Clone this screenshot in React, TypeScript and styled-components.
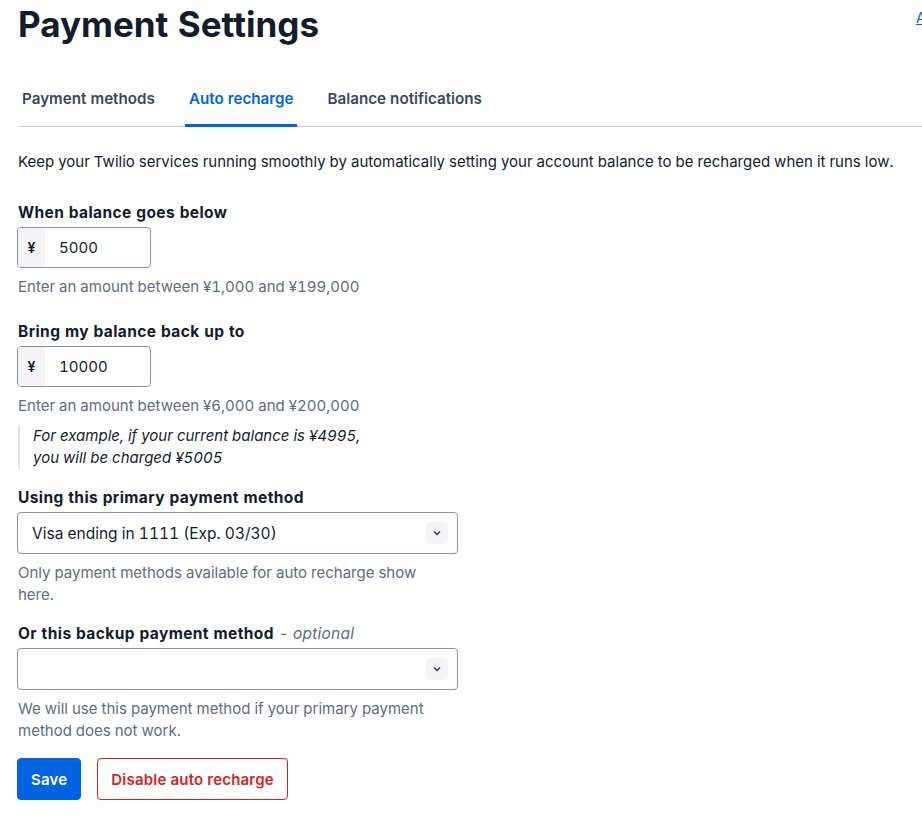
import React from 'react';
import styled, {createGlobalStyle} from 'styled-components';

const GlobalStyle = createGlobalStyle`
    html, body {
        margin: 0;
        padding: 0;
        overflow: hidden;
        background: #ffffff;
    }
    body {
        font-family: Inter, 'Noto Sans', sans-serif;
        font-variant-numeric: tabular-nums;
        color: #121c2d;
        -webkit-font-smoothing: antialiased;
    }
`

const tabs = ['Payment methods', 'Auto recharge', 'Balance notifications'];

const Chevron = () => (
    <svg width="10" height="10" viewBox="0 0 20 20" fill="none">
        <path d="M5 8l5 5 5-5" stroke="#394762" strokeWidth="3.4" strokeLinecap="round" strokeLinejoin="round"/>
    </svg>
);

export default function App() {
    return (
        <Page>
            <GlobalStyle/>
            <Header>
                <Title>Payment Settings</Title>
                <TopLink href="#">Add funds</TopLink>
            </Header>

            <TabList>
                {tabs.map((t) => (
                    <Tab key={t} $active={t === 'Auto recharge'}>{t}</Tab>
                ))}
            </TabList>

            <Intro>
                Keep your Twilio services running smoothly by automatically setting your account balance to be recharged when it runs low.
            </Intro>

            <Form>
                <Field $extra>
                    <Label>When balance goes below</Label>
                    <AmountInput>
                        <Prefix>¥</Prefix>
                        <Value>5000</Value>
                    </AmountInput>
                    <Help>Enter an amount between ¥1,000 and ¥199,000</Help>
                </Field>

                <Field>
                    <Label>Bring my balance back up to</Label>
                    <AmountInput>
                        <Prefix>¥</Prefix>
                        <Value>10000</Value>
                    </AmountInput>
                    <Help>Enter an amount between ¥6,000 and ¥200,000</Help>
                    <Example>
                        For example, if your current balance is ¥4995,<br/>
                        you will be charged ¥5005
                    </Example>
                </Field>

                <Field>
                    <Label>Using this primary payment method</Label>
                    <Select>
                        <SelectText>Visa ending in 1111 (Exp. 03/30)</SelectText>
                        <ChevronBox><Chevron/></ChevronBox>
                    </Select>
                    <Help $narrow>Only payment methods available for auto recharge show here.</Help>
                </Field>

                <Field>
                    <Label>Or this backup payment method <Optional>- optional</Optional></Label>
                    <Select>
                        <SelectText/>
                        <ChevronBox><Chevron/></ChevronBox>
                    </Select>
                    <Help $narrow>We will use this payment method if your primary payment method does not work.</Help>
                </Field>

                <Actions>
                    <Button $variant="primary">Save</Button>
                    <Button $variant="destructive">Disable auto recharge</Button>
                </Actions>
            </Form>
        </Page>
    );
}

const Page = styled.div`
    width: 1100px;
    padding: 0 0 0 18px;
    box-sizing: border-box;
`
const Header = styled.header`
    display: flex;
    align-items: flex-start;
`
const Title = styled.h1`
    min-width: 898px;
    margin: 0;
    padding-top: 1px;
    font-size: 35px;
    line-height: 46px;
    font-weight: 700;
    color: #121c2d;
`
const TopLink = styled.a`
    margin-top: 8px;
    font-size: 14px;
    line-height: 20px;
    color: #0263e0;
    text-decoration: underline;
`
const TabList = styled.nav`
    display: flex;
    gap: 26px;
    margin-top: 41px;
    border-bottom: 1px solid #cacdd8;
`
const Tab = styled.div<{ $active?: boolean }>`
    padding: 0 4px 14px;
    font-size: 15.2px;
    line-height: 22px;
    font-weight: 600;
    color: ${p => p.$active ? '#0263e0' : '#394762'};
    border-bottom: 3px solid ${p => p.$active ? '#0263e0' : 'transparent'};
    margin-bottom: -1px;
`
const Intro = styled.p`
    margin: 24px 0 0;
    font-size: 15px;
    line-height: 22px;
    color: #121c2d;
`
const Form = styled.div`
    display: flex;
    flex-direction: column;
    gap: 17px;
    margin-top: 29px;
    width: 440px;
`
const Field = styled.div<{ $extra?: boolean }>`
    display: flex;
    flex-direction: column;
    padding-bottom: ${p => p.$extra ? '6px' : '0'};
`
const Label = styled.label`
    font-size: 15.5px;
    line-height: 22px;
    font-weight: 700;
    color: #121c2d;
    margin-bottom: 3px;
    letter-spacing: 0.4px;
    white-space: nowrap;
`
const Optional = styled.span`
    font-weight: 400;
    font-style: italic;
    color: #606b85;
    letter-spacing: 0.2px;
`
const AmountInput = styled.div`
    display: flex;
    width: 134px;
    height: 41px;
    box-sizing: border-box;
    border: 1px solid #8891aa;
    border-radius: 4px;
    overflow: hidden;
    margin-left: -1px;
`
const Prefix = styled.span`
    display: flex;
    align-items: center;
    justify-content: center;
    width: 27px;
    background: #f4f4f6;
    font-size: 14px;
    font-weight: 600;
    color: #121c2d;
`
const Value = styled.span`
    display: flex;
    align-items: center;
    padding-left: 14px;
    font-size: 15px;
    color: #121c2d;
`
const Help = styled.p<{ $narrow?: boolean }>`
    margin: 8px 0 0;
    font-size: 15px;
    line-height: 22px;
    color: #606b85;
    max-width: ${p => p.$narrow ? '420px' : 'none'};
    white-space: ${p => p.$narrow ? 'normal' : 'nowrap'};
`
const Example = styled.blockquote`
    margin: 8px 0 1px;
    padding: 0 0 0 13px;
    border-left: 2px solid #e1e3ea;
    font-size: 15px;
    line-height: 22px;
    font-style: italic;
    color: #121c2d;
    white-space: nowrap;
`
const Select = styled.div`
    display: flex;
    align-items: center;
    justify-content: space-between;
    width: 441px;
    height: 42px;
    box-sizing: border-box;
    margin-left: -1px;
    padding: 0 9px 0 14px;
    border: 1px solid #8891aa;
    border-radius: 4px;
`
const SelectText = styled.span`
    font-size: 15.5px;
    color: #121c2d;
`
const ChevronBox = styled.span`
    display: flex;
    align-items: center;
    justify-content: center;
    width: 22px;
    height: 22px;
    border-radius: 4px;
    background: #f4f4f6;
`
const Actions = styled.div`
    display: flex;
    gap: 16px;
    margin-top: -1px;
    margin-left: -1px;
`
const Button = styled.button<{ $variant: 'primary' | 'destructive' }>`
    height: 42px;
    padding: 0 13px;
    border-radius: 4px;
    font-family: Inter, sans-serif;
    font-size: 15px;
    font-weight: 600;
    letter-spacing: 0.2px;
    cursor: pointer;
    background: ${p => p.$variant === 'primary' ? '#0263e0' : '#ffffff'};
    color: ${p => p.$variant === 'primary' ? '#ffffff' : '#d61f1f'};
    border: 1px solid ${p => p.$variant === 'primary' ? '#0263e0' : '#d61f1f'};
`
